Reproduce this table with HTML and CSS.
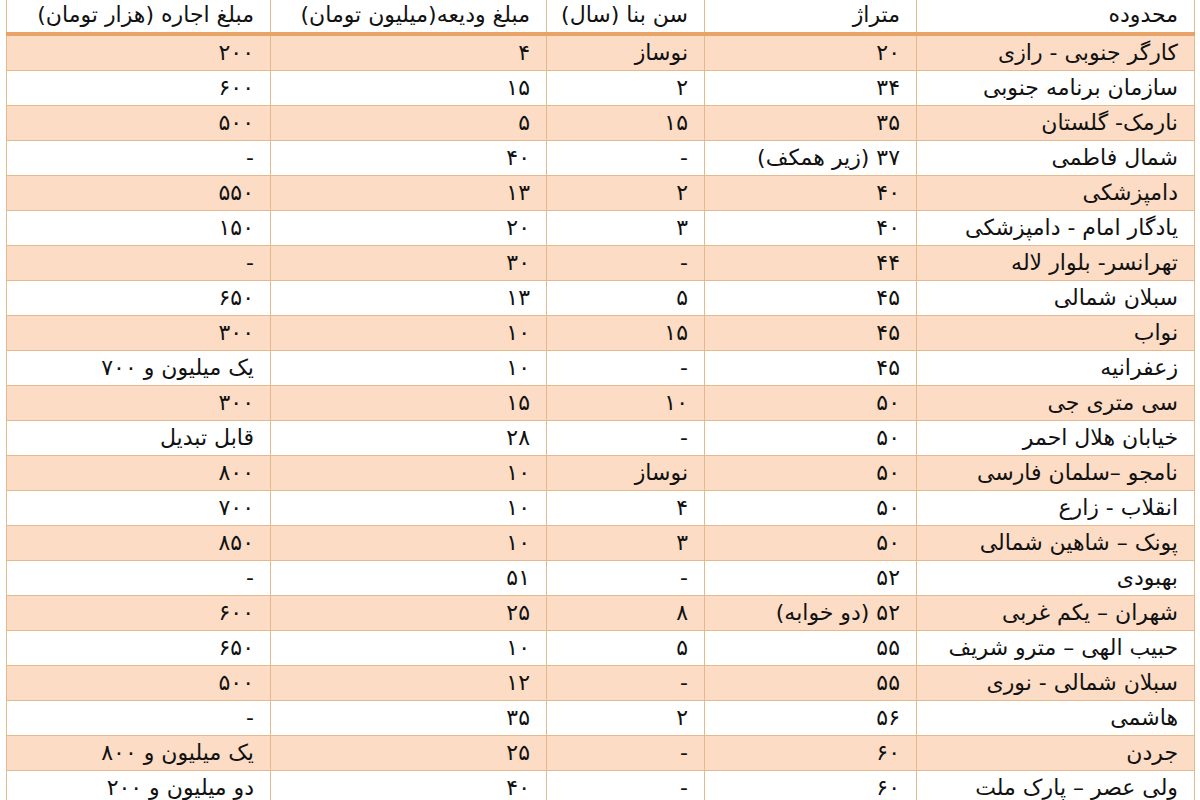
FILE: index.html
```html
<!DOCTYPE html>
<html lang="fa" dir="rtl">
<head>
<meta charset="utf-8">
<title>جدول اجاره</title>
<link rel="stylesheet" href="styles.css">
</head>
<body>
<table class="rent">
  <colgroup>
    <col class="c-area">
    <col class="c-size">
    <col class="c-age">
    <col class="c-deposit">
    <col class="c-rent">
  </colgroup>
  <thead>
    <tr>
      <th>محدوده</th>
      <th>متراژ</th>
      <th>سن بنا (سال)</th>
      <th>مبلغ ودیعه(میلیون تومان)</th>
      <th>مبلغ اجاره (هزار تومان)</th>
    </tr>
  </thead>
  <tbody>
    <tr class="odd"><td>کارگر جنوبی - رازی</td><td>۲۰</td><td>نوساز</td><td>۴</td><td>۲۰۰</td></tr>
    <tr><td>سازمان برنامه جنوبی</td><td>۳۴</td><td>۲</td><td>۱۵</td><td>۶۰۰</td></tr>
    <tr class="odd"><td>نارمک- گلستان</td><td>۳۵</td><td>۱۵</td><td>۵</td><td>۵۰۰</td></tr>
    <tr><td>شمال فاطمی</td><td>۳۷ (زیر همکف)</td><td>-</td><td>۴۰</td><td>-</td></tr>
    <tr class="odd"><td>دامپزشکی</td><td>۴۰</td><td>۲</td><td>۱۳</td><td>۵۵۰</td></tr>
    <tr><td>یادگار امام - دامپزشکی</td><td>۴۰</td><td>۳</td><td>۲۰</td><td>۱۵۰</td></tr>
    <tr class="odd"><td>تهرانسر- بلوار لاله</td><td>۴۴</td><td>-</td><td>۳۰</td><td>-</td></tr>
    <tr><td>سبلان شمالی</td><td>۴۵</td><td>۵</td><td>۱۳</td><td>۶۵۰</td></tr>
    <tr class="odd"><td>نواب</td><td>۴۵</td><td>۱۵</td><td>۱۰</td><td>۳۰۰</td></tr>
    <tr><td>زعفرانیه</td><td>۴۵</td><td>-</td><td>۱۰</td><td>یک میلیون و ۷۰۰</td></tr>
    <tr class="odd"><td>سی متری جی</td><td>۵۰</td><td>۱۰</td><td>۱۵</td><td>۳۰۰</td></tr>
    <tr><td>خیابان هلال احمر</td><td>۵۰</td><td>-</td><td>۲۸</td><td>قابل تبدیل</td></tr>
    <tr class="odd"><td>نامجو –سلمان فارسی</td><td>۵۰</td><td>نوساز</td><td>۱۰</td><td>۸۰۰</td></tr>
    <tr><td>انقلاب - زارع</td><td>۵۰</td><td>۴</td><td>۱۰</td><td>۷۰۰</td></tr>
    <tr class="odd"><td>پونک – شاهین شمالی</td><td>۵۰</td><td>۳</td><td>۱۰</td><td>۸۵۰</td></tr>
    <tr><td>بهبودی</td><td>۵۲</td><td>-</td><td>۵۱</td><td>-</td></tr>
    <tr class="odd"><td>شهران – یکم غربی</td><td>۵۲ (دو خوابه)</td><td>۸</td><td>۲۵</td><td>۶۰۰</td></tr>
    <tr><td>حبیب الهی – مترو شریف</td><td>۵۵</td><td>۵</td><td>۱۰</td><td>۶۵۰</td></tr>
    <tr class="odd"><td>سبلان شمالی - نوری</td><td>۵۵</td><td>-</td><td>۱۲</td><td>۵۰۰</td></tr>
    <tr><td>هاشمی</td><td>۵۶</td><td>۲</td><td>۳۵</td><td>-</td></tr>
    <tr class="odd"><td>جردن</td><td>۶۰</td><td>-</td><td>۲۵</td><td>یک میلیون و ۸۰۰</td></tr>
    <tr><td>ولی عصر – پارک ملت</td><td>۶۰</td><td>-</td><td>۴۰</td><td>دو میلیون و ۲۰۰</td></tr>
  </tbody>
</table>
</body>
</html>
```
FILE: styles.css
```css
html, body {
  margin: 0;
  padding: 0;
  background: #ffffff;
}

body {
  font-family: "DejaVu Sans", "Liberation Sans", sans-serif;
  color: #111111;
  overflow: hidden;
}

.rent {
  direction: rtl;
  border-collapse: collapse;
  table-layout: fixed;
  width: 1188px;
  margin-right: 5px;
  margin-left: 7px;
  font-size: 22px;
  line-height: 26px;
}

.c-area { width: 278px; }
.c-size { width: 212px; }
.c-age { width: 158px; }
.c-deposit { width: 276px; }
.c-rent { width: 264px; }

.rent th,
.rent td {
  text-align: right;
  padding: 0 16px 0 4px;
  border-right: 1px solid #e3b98e;
  border-left: 1px solid #e3b98e;
  white-space: nowrap;
  overflow: hidden;
  font-weight: normal;
}

.rent th {
  height: 30px;
  padding-bottom: 2px;
  border-bottom: 4px solid #eaa366;
}

.rent td {
  height: 34px;
  border-bottom: 1px solid #e3b98e;
}

.rent tr.odd td {
  background: #fcdcc4;
}
```
